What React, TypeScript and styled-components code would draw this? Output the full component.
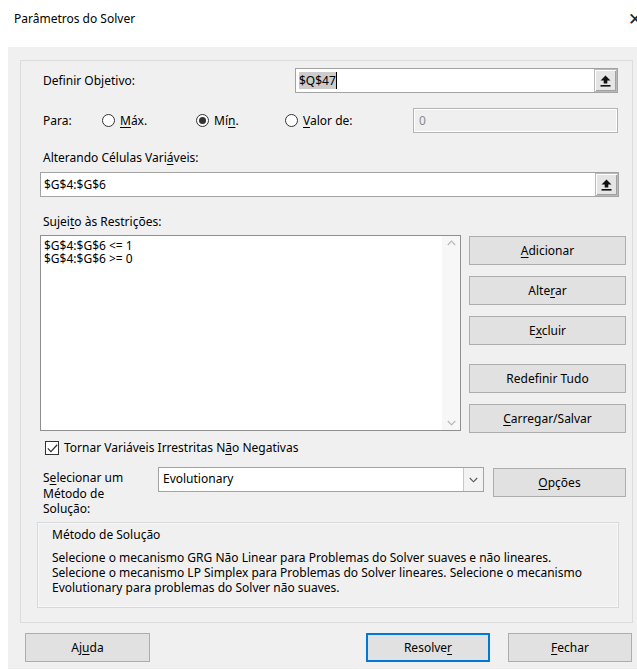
import React from "react";
import styled, { createGlobalStyle, css } from "styled-components";

const GlobalStyle = createGlobalStyle`
  html, body { margin: 0; padding: 0; background: #ffffff; }
  body {
    font-family: "Noto Sans", "Segoe UI", sans-serif;
    font-size: 12px;
    color: #000;
  }
  * { box-sizing: border-box; }
`;

const Window = styled.div`
  width: 637px;
  height: 670px;
  background: #ffffff;
  overflow: hidden;
  display: flex;
  flex-direction: column;
`;

const TitleBar = styled.div`
  height: 47px;
  flex: none;
  display: flex;
  justify-content: space-between;
  align-items: flex-start;
  padding: 10px 0 0 14px;
  line-height: 18px;
`;

const Close = styled.span`
  font-size: 17px;
  line-height: 18px;
  margin-right: -5px;
  color: #222;
`;

const Panel = styled.div`
  margin-left: 8px;
  height: 622px;
  background: #f0f0f0;
  padding: 13px 4px 0 12px;
  display: flex;
  flex-direction: column;
`;

const GroupBox = styled.div`
  width: 613px;
  height: 563px;
  border: 1px solid #dcdcdc;
  padding: 7px 0 0 19px;
  display: flex;
  flex-direction: column;
`;

const U = styled.span`
  text-decoration: underline;
  text-underline-offset: 2px;
`;

const Row = styled.div<{ $top?: number; $h?: number }>`
  display: flex;
  align-items: center;
  margin-top: ${(p) => p.$top ?? 0}px;
  height: ${(p) => p.$h ?? 25}px;
`;

const Label = styled.span<{ $w?: number; $top?: number }>`
  margin-left: 3px;
  margin-top: ${(p) => p.$top ?? 0}px;
  line-height: 16px;
  ${(p) => p.$w && css`width: ${p.$w}px; flex: none;`}
`;

const Field = styled.div<{ $w: number; $disabled?: boolean }>`
  width: ${(p) => p.$w}px;
  height: 25px;
  flex: none;
  display: flex;
  align-items: center;
  border: 1px solid ${(p) => (p.$disabled ? "#b4b4b4" : "#a3a3a3")};
  background: ${(p) => (p.$disabled ? "#efefef" : "#ffffff")};
  ${(p) => p.$disabled && css`box-shadow: inset 0 0 0 1px #ffffff; color: #8a8a8a;`}
  padding-left: ${(p) => (p.$disabled ? 5 : 3)}px;
`;

const FieldText = styled.span`
  flex: 1;
  line-height: 16px;
  white-space: nowrap;
`;

const Selected = styled.span`
  background: #cccccc;
  border-right: 1px solid #000;
`;

const RefButton = styled.div`
  width: 23px;
  height: 23px;
  flex: none;
  display: flex;
  align-items: center;
  justify-content: center;
  background: #e5e5e5;
  border: 1px solid #b9b9b9;
  box-shadow: inset 1px 1px 0 #ffffff, inset -1px -1px 0 #a0a0a0;
`;

const UploadIcon = () => (
  <svg width="11" height="12" viewBox="0 0 11 12">
    <path d="M5.5 0.5 L10.5 5.5 H7.3 V8.5 H3.7 V5.5 H0.5 Z" fill="#111" />
    <rect x="0.5" y="10" width="10" height="1.6" fill="#111" />
  </svg>
);

const RadioOption = styled.label<{ $w: number }>`
  width: ${(p) => p.$w}px;
  flex: none;
  display: flex;
  align-items: center;
  gap: 5px;
  line-height: 16px;
`;

const RadioCircle = styled.span<{ $on?: boolean }>`
  width: 13px;
  height: 13px;
  border-radius: 50%;
  border: 1px solid #333;
  background: #fff;
  display: flex;
  align-items: center;
  justify-content: center;
  &::after {
    content: "";
    width: 7px;
    height: 7px;
    border-radius: 50%;
    background: ${(p) => (p.$on ? "#333" : "transparent")};
  }
`;

const RestrictionArea = styled.div`
  display: flex;
  gap: 8px;
  margin-top: 5px;
`;

const ListBox = styled.div`
  width: 421px;
  height: 196px;
  flex: none;
  border: 1px solid #8f8f8f;
  background: #fff;
  display: flex;
`;

const ListItems = styled.div`
  flex: 1;
  padding: 3px 0 0 3px;
  line-height: 13px;
`;

const ScrollTrack = styled.div`
  width: 18px;
  background: #f7f7f7;
  display: flex;
  flex-direction: column;
  justify-content: space-between;
  align-items: center;
  padding: 4px 0 4px;
`;

const Chevron = ({ down }: { down?: boolean }) => (
  <svg width="9" height="6" viewBox="0 0 9 6">
    <path
      d={down ? "M0.8 1 L4.5 4.8 L8.2 1" : "M0.8 5 L4.5 1.2 L8.2 5"}
      fill="none"
      stroke="#b8b8b8"
      strokeWidth="1.2"
    />
  </svg>
);

const ButtonColumn = styled.div`
  display: flex;
  flex-direction: column;
  padding-top: 1px;
`;

const Button = styled.div<{ $w: number; $top?: number; $left?: number; $default?: boolean }>`
  width: ${(p) => p.$w}px;
  height: 29px;
  flex: none;
  margin-top: ${(p) => p.$top ?? 0}px;
  margin-left: ${(p) => p.$left ?? 0}px;
  display: flex;
  align-items: center;
  justify-content: center;
  background: #e1e1e1;
  border: 1px solid #adadad;
  line-height: 16px;
  ${(p) =>
    p.$default &&
    css`
      border-color: #0078d7;
      box-shadow: inset 0 0 0 1px #0078d7;
    `}
`;

const CheckRow = styled.label`
  display: flex;
  align-items: center;
  gap: 5px;
  margin: 7px 0 0 5px;
  height: 16px;
  line-height: 16px;
`;

const CheckBox = styled.span`
  width: 14px;
  height: 14px;
  border: 1px solid #333;
  background: #fff;
  display: flex;
  align-items: center;
  justify-content: center;
`;

const MethodRow = styled.div`
  display: flex;
  align-items: flex-start;
  margin-top: 11px;
  height: 55px;
`;

const MethodLabel = styled.div`
  width: 115px;
  flex: none;
  margin: 3px 0 0 3px;
  line-height: 15.5px;
`;

const Select = styled.div`
  width: 326px;
  height: 25px;
  flex: none;
  display: flex;
  border: 1px solid #a3a3a3;
  background: #fff;
`;

const SelectValue = styled.span`
  flex: 1;
  padding-left: 4px;
  line-height: 22px;
`;

const SelectArrow = styled.span`
  width: 20px;
  display: flex;
  align-items: center;
  justify-content: center;
  border-left: 1px solid #c8c8c8;
  background: #f3f3f3;
`;

const MethodBox = styled.div`
  width: 582px;
  height: 86px;
  margin-left: -3px;
  border: 1px solid #d9d9d9;
  box-shadow: inset 0 0 0 1px #f7f7f7;
  padding: 4px 0 0 14px;
`;

const MethodTitle = styled.div`
  line-height: 16px;
`;

const MethodText = styled.div`
  margin-top: 7px;
  line-height: 15px;
`;

const Footer = styled.div`
  display: flex;
  margin: 10px 0 0 5px;
  width: 607px;
`;

const Spacer = styled.div`
  flex: 1;
`;

export default function App() {
  return (
    <Window>
      <GlobalStyle />
      <TitleBar>
        <span>Parâmetros do Solver</span>
        <Close>✕</Close>
      </TitleBar>
      <Panel>
        <GroupBox>
          <Row>
            <Label $w={252}>
              Definir Ob<U>j</U>etivo:
            </Label>
            <Field $w={323}>
              <FieldText>
                <Selected>$Q$47</Selected>
              </FieldText>
              <RefButton>
                <UploadIcon />
              </RefButton>
            </Field>
          </Row>

          <Row $top={15}>
            <Label $w={59}>Para:</Label>
            <RadioOption $w={94}>
              <RadioCircle />
              <span>
                <U>M</U>áx.
              </span>
            </RadioOption>
            <RadioOption $w={89}>
              <RadioCircle $on />
              <span>
                Mí<U>n</U>.
              </span>
            </RadioOption>
            <RadioOption $w={128}>
              <RadioCircle />
              <span>
                <U>V</U>alor de:
              </span>
            </RadioOption>
            <Field $w={205} $disabled>
              <FieldText>0</FieldText>
            </Field>
          </Row>

          <Label $top={17}>
            Alterando Células Vari<U>á</U>veis:
          </Label>
          <Row $top={6}>
            <Field $w={579}>
              <FieldText>$G$4:$G$6</FieldText>
              <RefButton>
                <UploadIcon />
              </RefButton>
            </Field>
          </Row>

          <Label $top={17}>
            Sujei<U>t</U>o às Restrições:
          </Label>
          <RestrictionArea>
            <ListBox>
              <ListItems>
                <div>$G$4:$G$6 &lt;= 1</div>
                <div>$G$4:$G$6 &gt;= 0</div>
              </ListItems>
              <ScrollTrack>
                <Chevron />
                <Chevron down />
              </ScrollTrack>
            </ListBox>
            <ButtonColumn>
              <Button $w={157}>
                <span>
                  <U>A</U>dicionar
                </span>
              </Button>
              <Button $w={157} $top={11}>
                <span>
                  Alte<U>r</U>ar
                </span>
              </Button>
              <Button $w={157} $top={11}>
                <span>
                  E<U>x</U>cluir
                </span>
              </Button>
              <Button $w={157} $top={19}>
                <span>
                  Redef<U>i</U>nir Tudo
                </span>
              </Button>
              <Button $w={157} $top={11}>
                <span>
                  <U>C</U>arregar/Salvar
                </span>
              </Button>
            </ButtonColumn>
          </RestrictionArea>

          <CheckRow>
            <CheckBox>
              <svg width="11" height="9" viewBox="0 0 11 9">
                <path d="M0.8 4.4 L3.9 7.6 L10.2 0.8" fill="none" stroke="#333" strokeWidth="1.3" />
              </svg>
            </CheckBox>
            <span>
              Tornar Variáveis Irrestritas N<U>ã</U>o Negativas
            </span>
          </CheckRow>

          <MethodRow>
            <MethodLabel>
              S<U>e</U>lecionar um
              <br />
              Método de
              <br />
              Solução:
            </MethodLabel>
            <Select>
              <SelectValue>Evolutionary</SelectValue>
              <SelectArrow>
                <svg width="9" height="6" viewBox="0 0 9 6">
                  <path d="M0.8 1 L4.5 4.8 L8.2 1" fill="none" stroke="#555" strokeWidth="1.1" />
                </svg>
              </SelectArrow>
            </Select>
            <Button $w={133} $top={1} $left={9}>
              <span>
                <U>O</U>pções
              </span>
            </Button>
          </MethodRow>

          <MethodBox>
            <MethodTitle>Método de Solução</MethodTitle>
            <MethodText>
              Selecione o mecanismo GRG Não Linear para Problemas do Solver suaves e não lineares.
              <br />
              Selecione o mecanismo LP Simplex para Problemas do Solver lineares. Selecione o mecanismo
              <br />
              Evolutionary para problemas do Solver não suaves.
            </MethodText>
          </MethodBox>
        </GroupBox>

        <Footer>
          <Button $w={125}>
            <span>
              Aj<U>u</U>da
            </span>
          </Button>
          <Spacer />
          <Button $w={124} $default>
            <span>
              Resolve<U>r</U>
            </span>
          </Button>
          <Button $w={124} $left={18}>
            <span>
              <U>F</U>echar
            </span>
          </Button>
        </Footer>
      </Panel>
    </Window>
  );
}
